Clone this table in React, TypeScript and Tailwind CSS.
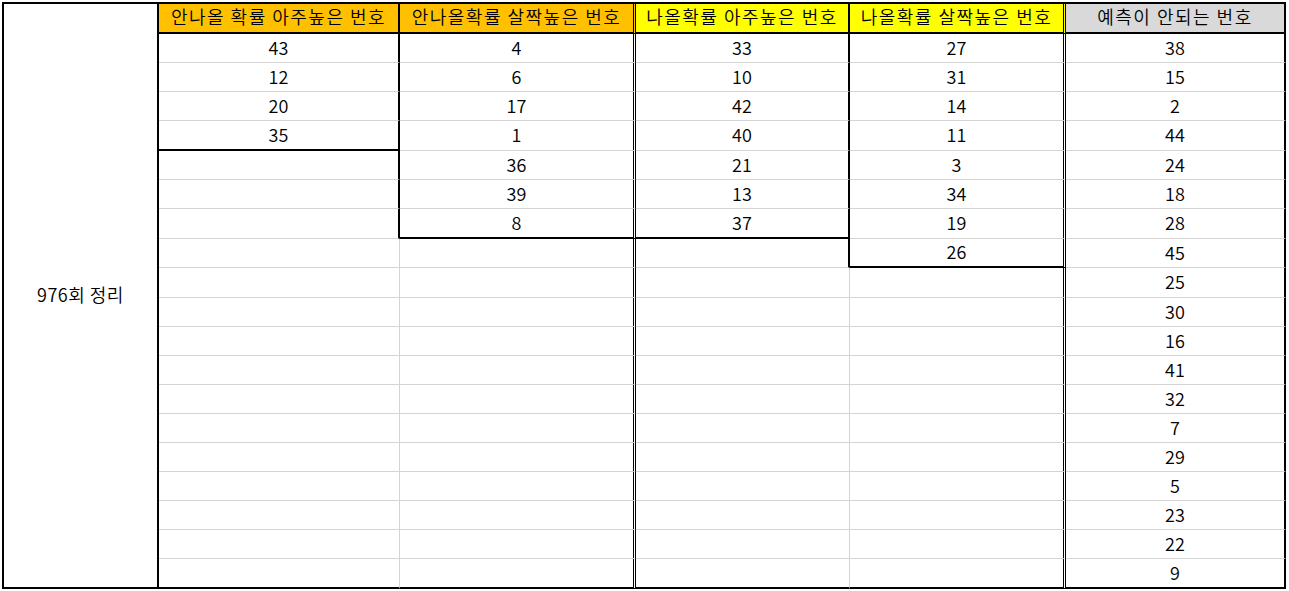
import React from "react";

type Col = {
  head: string;
  bg: string;
  vals: number[];
  box: number; // last row inside the black box
  right: "solid" | "double" | "outer";
  rightBlack: number; // right edge is black down to this row
};

const cols: Col[] = [
  { head: "안나올 확률 아주높은 번호", bg: "bg-[#ffc000]", vals: [43, 12, 20, 35], box: 4, right: "solid", rightBlack: 7 },
  { head: "안나올확률 살짝높은 번호", bg: "bg-[#ffc000]", vals: [4, 6, 17, 1, 36, 39, 8], box: 7, right: "double", rightBlack: 19 },
  { head: "나올확률 아주높은 번호", bg: "bg-[#ffff00]", vals: [33, 10, 42, 40, 21, 13, 37], box: 7, right: "solid", rightBlack: 8 },
  { head: "나올확률 살짝높은 번호", bg: "bg-[#ffff00]", vals: [27, 31, 14, 11, 3, 34, 19, 26], box: 8, right: "double", rightBlack: 19 },
  {
    head: "예측이 안되는 번호",
    bg: "bg-[#d9d9d9]",
    vals: [38, 15, 2, 44, 24, 18, 28, 45, 25, 30, 16, 41, 32, 7, 29, 5, 23, 22, 9],
    box: 19,
    right: "outer",
    rightBlack: 19,
  },
];

const ROWS = 19;

function rightCls(c: Col, row: number) {
  if (c.right === "double") return "border-r-[3px] [border-right-style:double] border-r-black";
  if (c.right === "outer" || row <= c.rightBlack) return "border-r-2 border-r-black";
  return "border-r border-r-[#d4d4d4]";
}

function bottomCls(c: Col, row: number) {
  if (row === c.box || row === ROWS) return "border-b-2 border-b-black";
  return "border-b border-b-[#d4d4d4]";
}

export default function App() {
  return (
    <div className="min-h-screen bg-white font-['Noto_Sans_CJK_KR',sans-serif] text-[18px] font-[350] text-black">
      <div className="ml-[2px] mt-[2px] w-fit border-l-2 border-t-2 border-black">
        <div className="grid grid-cols-[155px_241px_236px_214px_216px_220px] grid-rows-[30px_29px_29px_29px_30px_29px_29px_30px_29px_30px_29px_29px_29px_29px_29px_29px_29px_29px_29px_30px]">
          <div className="col-start-1 row-span-full flex items-center justify-center border-r-2 border-b-2 border-black pb-[2px] tracking-[0.5px]">
            976회 정리
          </div>

          {cols.map((c, i) => (
            <div
              key={"h" + i}
              className={`row-start-1 flex items-center justify-center pb-[4px] tracking-[1.5px] border-b-2 border-b-black ${c.bg} ${rightCls(c, 0)}`}
            >
              {c.head}
            </div>
          ))}

          {Array.from({ length: ROWS }).map((_, r) =>
            cols.map((c, i) => (
              <div
                key={r + "-" + i}
                className={`flex items-center justify-center pb-[3px] leading-none ${rightCls(c, r + 1)} ${bottomCls(c, r + 1)}`}
              >
                {c.vals[r] ?? ""}
              </div>
            ))
          )}
        </div>
      </div>
    </div>
  );
}
